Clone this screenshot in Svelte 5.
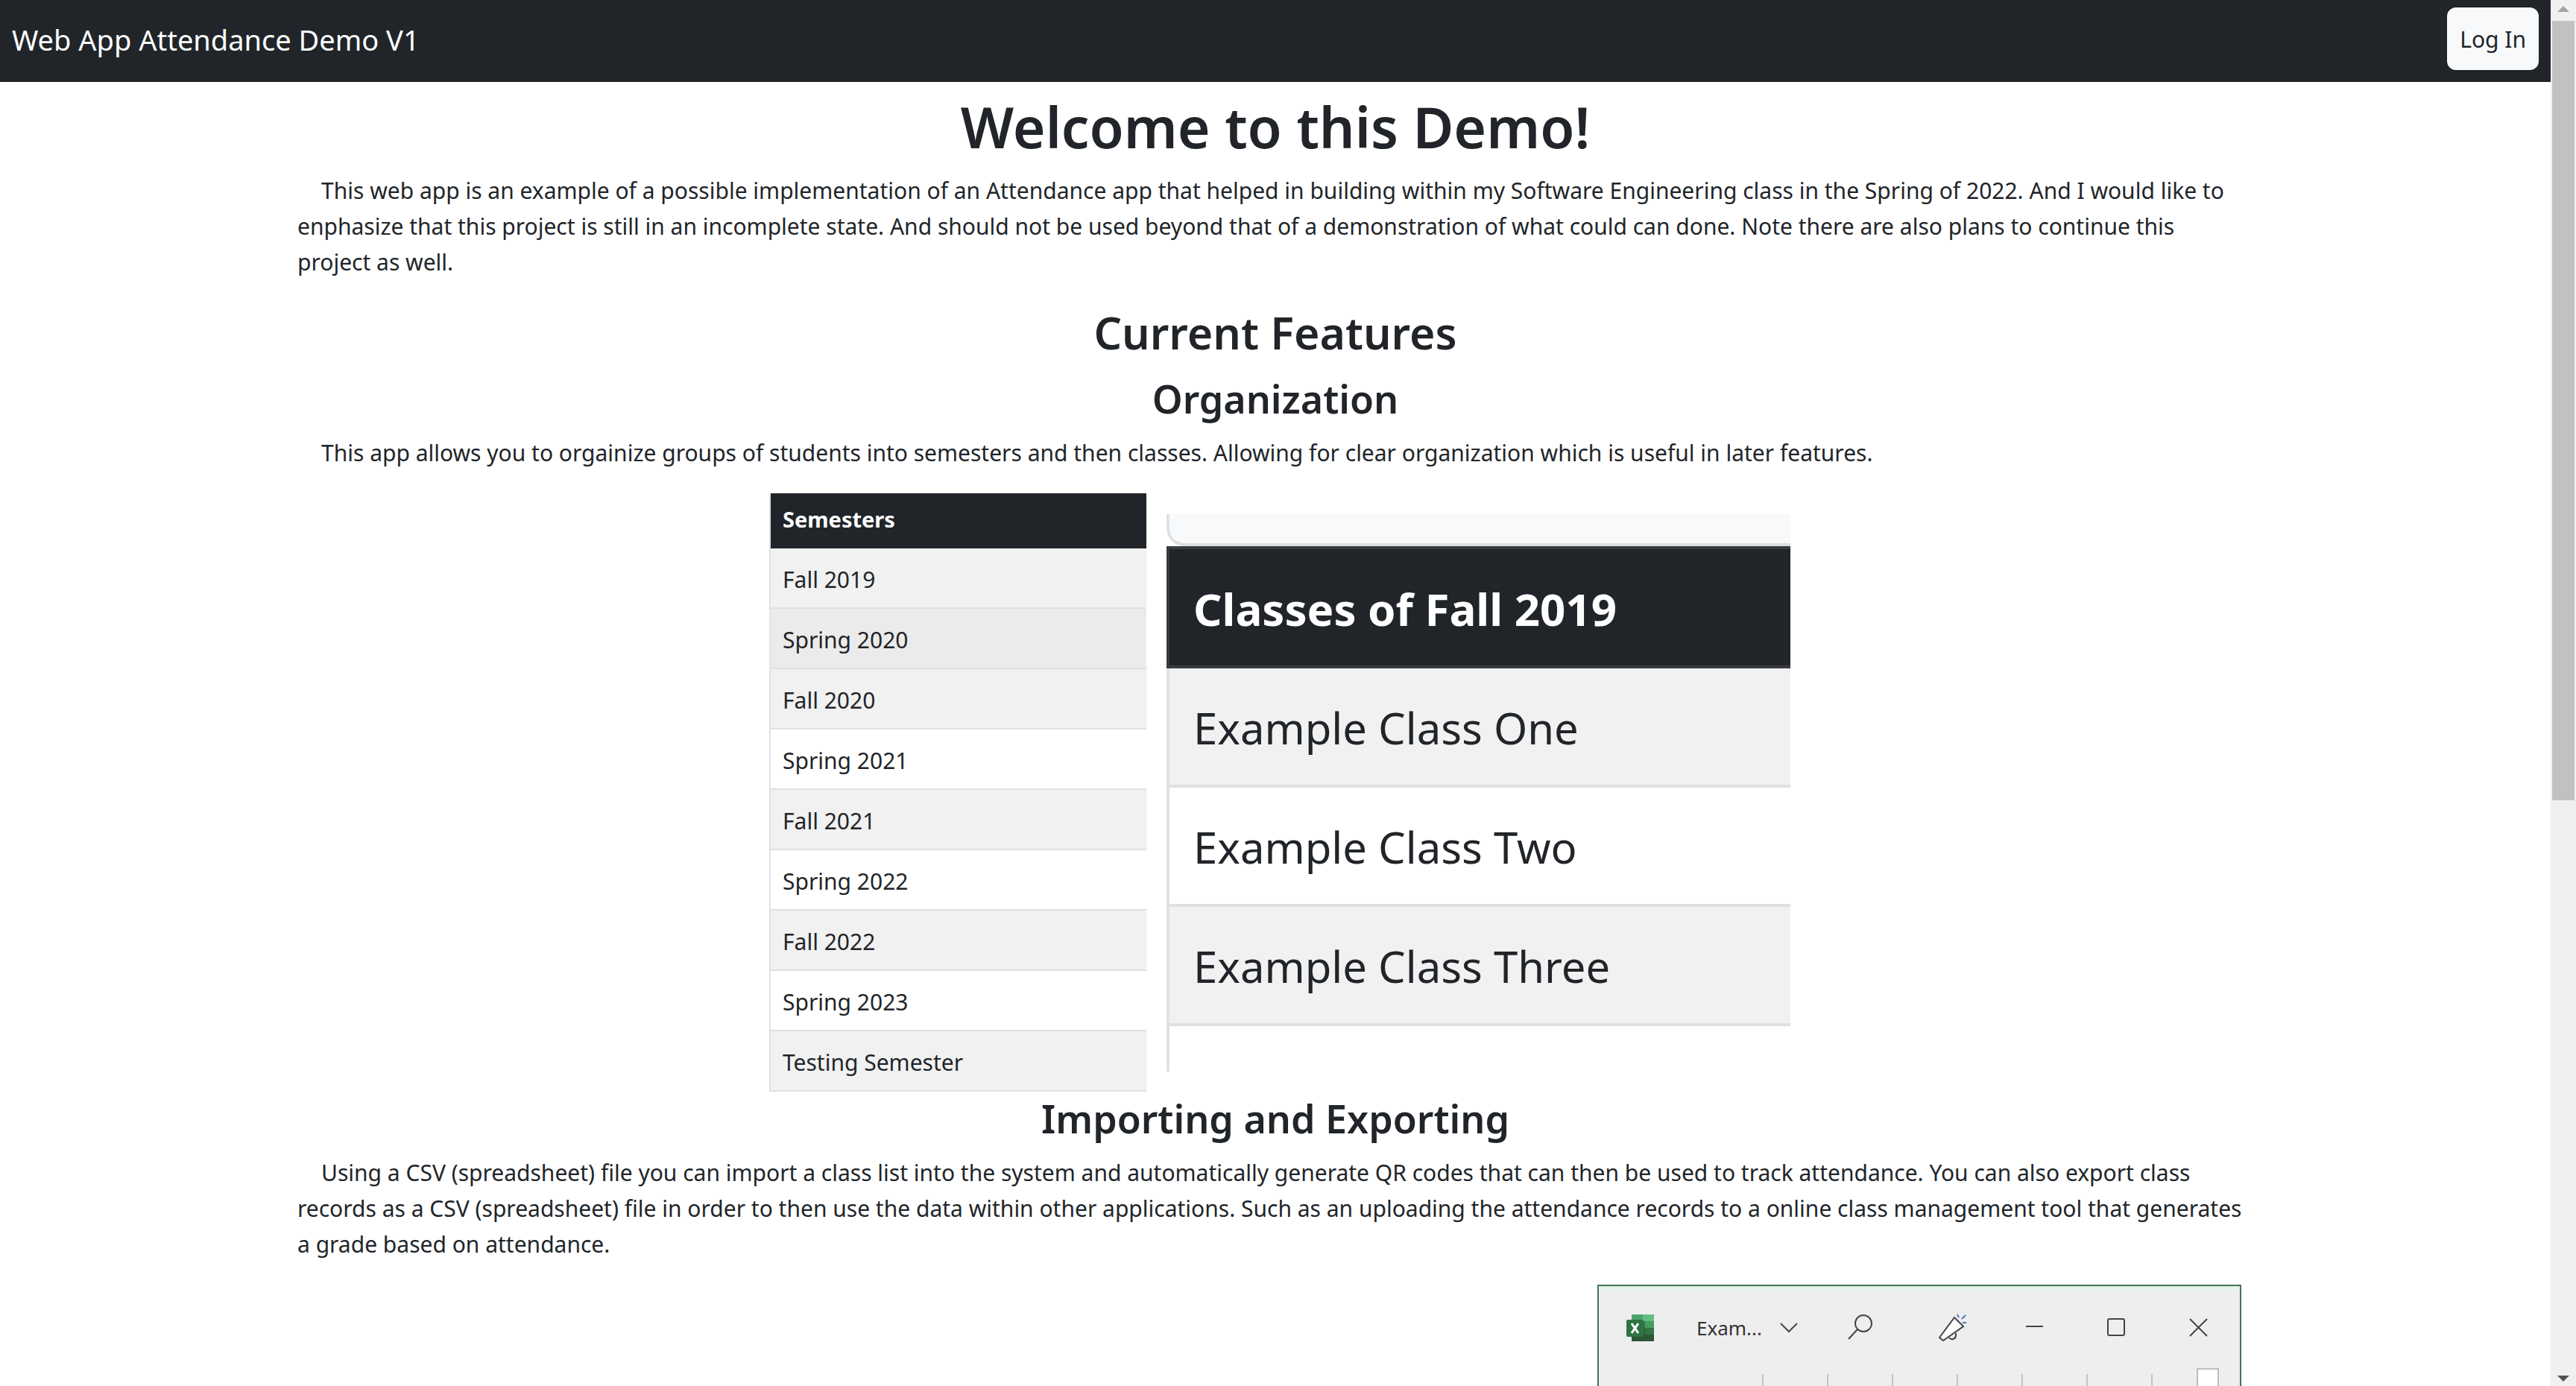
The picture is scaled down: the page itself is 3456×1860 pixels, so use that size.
<script>
  const semesters = [
    'Fall 2019', 'Spring 2020', 'Fall 2020', 'Spring 2021', 'Fall 2021',
    'Spring 2022', 'Fall 2022', 'Spring 2023', 'Testing Semester'
  ];
  const classes = ['Example Class One', 'Example Class Two', 'Example Class Three'];
  const columns = [1, 2, 3, 4, 5, 6, 7];
</script>

<div class="window">
  <div class="page">
    <nav class="navbar">
      <a class="brand" href="#home">Web App Attendance Demo V1</a>
      <button class="login" type="button">Log In</button>
    </nav>

    <main class="container">
      <h1>Welcome to this Demo!</h1>
      <p>
        This web app is an example of a possible implementation of an Attendance app that helped in building within my Software Engineering class in the Spring of 2022. And I would like to<br />
        enphasize that this project is still in an incomplete state. And should not be used beyond that of a demonstration of what could can done. Note there are also plans to continue this<br />
        project as well.
      </p>

      <h2>Current Features</h2>
      <h3>Organization</h3>
      <p>This app allows you to orgainize groups of students into semesters and then classes. Allowing for clear organization which is useful in later features.</p>

      <div class="figures">
        <table class="semesters">
          <thead><tr><th scope="col">Semesters</th></tr></thead>
          <tbody>
            {#each semesters as name, i}
              <tr class:striped={i % 2 === 0} class:hovered={i === 1}><td>{name}</td></tr>
            {/each}
          </tbody>
        </table>

        <div class="classes">
          <div class="card-edge"></div>
          <table>
            <thead><tr><th scope="col">Classes of Fall 2019</th></tr></thead>
            <tbody>
              {#each classes as name, i}
                <tr class:striped={i % 2 === 0}><td>{name}</td></tr>
              {/each}
            </tbody>
          </table>
          <div class="blank"></div>
        </div>
      </div>

      <h3>Importing and Exporting</h3>
      <p>
        Using a CSV (spreadsheet) file you can import a class list into the system and automatically generate QR codes that can then be used to track attendance. You can also export class<br />
        records as a CSV (spreadsheet) file in order to then use the data within other applications. Such as an uploading the attendance records to a online class management tool that generates<br />
        a grade based on attendance.
      </p>

      <section class="sheet" aria-label="Spreadsheet">
        <div class="titlebar">
          <svg class="logo" viewBox="0 0 38 38" aria-hidden="true">
            <rect x="7" y="1" width="15" height="9" fill="#4da56c" />
            <rect x="22" y="1" width="15" height="9" fill="#62bd83" />
            <rect x="7" y="10" width="15" height="9" fill="#357c4b" />
            <rect x="22" y="10" width="15" height="9" fill="#449d60" />
            <rect x="7" y="19" width="15" height="18" fill="#2b5737" />
            <rect x="22" y="19" width="15" height="9" fill="#337345" />
            <rect x="22" y="28" width="15" height="9" fill="#2b5737" />
            <rect x="9" y="10" width="16" height="22" fill="#244f31" opacity=".5" />
            <rect x="0" y="8" width="23" height="23" rx="2" fill="#2f7344" />
            <path d="M7 13l9 13M16 13L7 26" stroke="#fff" stroke-width="3" fill="none" />
          </svg>
          <button class="filename" type="button">
            <span>Exam...</span>
            <svg viewBox="0 0 24 14" width="24" height="14" aria-hidden="true"><path d="M1 1l11 11L23 1" /></svg>
          </button>
          <div class="tools">
            <button class="search" type="button" aria-label="Search">
              <svg viewBox="0 0 38 38"><circle cx="23" cy="13" r="11" /><path d="M15 21L3 34" /></svg>
            </button>
            <button type="button" aria-label="What's new">
              <svg viewBox="0 0 38 38">
                <path d="M14 32a5 5 0 0 0 9-2v-4" />
                <path d="M21 5L1 32l5 4L33 17z" fill="#fff" />
                <path d="M25 1l2 4M36 2l-5 5M32 12h5" stroke="#4a7cb5" />
              </svg>
            </button>
            <button type="button" aria-label="Minimize">
              <svg viewBox="0 0 38 38"><path d="M7 17h23" /></svg>
            </button>
            <button type="button" aria-label="Maximize">
              <svg viewBox="0 0 38 38"><rect x="7" y="7" width="22" height="22" rx="2" /></svg>
            </button>
            <button type="button" aria-label="Close">
              <svg viewBox="0 0 38 38"><path d="M7 7l23 23M30 7L7 30" /></svg>
            </button>
          </div>
        </div>
        <div class="ruler">
          {#each columns as column (column)}<span class="tick"></span>{/each}
          <span class="corner"></span>
        </div>
      </section>
    </main>
  </div>

  <div class="scrollbar" aria-hidden="true">
    <svg viewBox="0 0 16 8" width="16" height="8"><path d="M0 8l8-8 8 8z" fill="#a3a3a3" /></svg>
    <div class="track"><div class="thumb"></div></div>
    <svg viewBox="0 0 16 8" width="16" height="8"><path d="M0 0l8 8 8-8z" fill="#505050" /></svg>
  </div>
</div>

<style>
  :global(body) {
    margin: 0;
    background: #fff;
  }

  .window {
    display: flex;
    height: 100vh;
    overflow: hidden;
    color: #212529;
    font-family: 'Noto Sans', 'Open Sans', sans-serif;
    font-size: 30px;
    line-height: 48px;
  }

  .page {
    flex: 1;
    min-width: 0;
    overflow: hidden;
  }

  .navbar {
    display: flex;
    align-items: center;
    justify-content: space-between;
    box-sizing: border-box;
    height: 110px;
    padding: 0 16px 6px;
    background: #212529;
  }

  .brand {
    padding-top: 2px;
    color: #fff;
    font-size: 38px;
    text-decoration: none;
  }

  .login {
    height: 84px;
    padding: 2px 17px 0;
    border: 0;
    border-radius: 12px;
    background: #f8f9fa;
    color: #212529;
    font: inherit;
  }

  .container {
    box-sizing: border-box;
    max-width: 2640px;
    margin: 0 auto;
    padding: 8px 8px 0;
  }

  h1,
  h2,
  h3 {
    margin: 0 0 14px;
    padding-top: 2px;
    font-weight: 600;
    text-align: center;
  }

  h1 {
    margin-bottom: 12px;
    padding-top: 4px;
    font-size: 75px;
    line-height: 96px;
  }

  h2 {
    font-size: 59px;
    line-height: 77px;
  }

  h3 {
    font-size: 52px;
    line-height: 67px;
  }

  p {
    margin: 0 0 30px;
    padding-top: 2px;
    text-indent: 32px;
    white-space: nowrap;
  }

  .figures {
    display: flex;
    align-items: center;
    justify-content: center;
    gap: 27px;
    padding-left: 12px;
  }

  table {
    width: 100%;
    border-collapse: separate;
    border-spacing: 0;
  }

  th,
  td {
    box-sizing: border-box;
    text-align: left;
  }

  th {
    background: #212529;
    color: #fff;
    font-weight: 700;
  }

  td {
    border-bottom: 2px solid #dfe0e1;
  }

  .striped {
    background: #f1f1f1;
  }

  .hovered {
    background: #ebebeb;
  }

  .semesters {
    width: 506px;
    border-left: 2px solid #dee2e6;
  }

  .semesters th {
    height: 74px;
    padding: 0 16px 4px;
    font-size: 29px;
  }

  .semesters td {
    height: 81px;
    padding: 4px 16px 0;
  }

  .classes {
    width: 837px;
    font-size: 58px;
    line-height: 96px;
  }

  .card-edge {
    box-sizing: border-box;
    height: 43px;
    border-bottom: 4px solid #dcdee0;
    border-left: 4px solid #dee2e6;
    border-bottom-left-radius: 24px;
    background: #f8f9fa;
  }

  .classes th {
    height: 164px;
    padding: 4px 32px 0;
    border: 4px solid #373b3e;
    border-right: 0;
    font-size: 60px;
  }

  .classes td {
    height: 160px;
    padding: 4px 32px 0;
    border-bottom: 4px solid #dfe0e1;
    border-left: 4px solid #dee2e6;
  }

  .blank {
    height: 61px;
    border-left: 4px solid #dee2e6;
  }

  .sheet {
    box-sizing: border-box;
    width: 864px;
    height: 800px;
    margin-left: auto;
    margin-right: 16px;
    border: 2px solid #47725a;
    background: #eee;
    box-shadow: inset 0 4px 3px #e2f5e3;
  }

  .titlebar {
    display: flex;
    align-items: center;
    box-sizing: border-box;
    height: 110px;
    padding: 2px 36px 0 37px;
  }

  .titlebar svg {
    fill: none;
    stroke: #444;
    stroke-width: 2;
  }

  .titlebar .logo {
    width: 38px;
    height: 38px;
    stroke: none;
  }

  .titlebar button {
    padding: 0;
    border: 0;
    background: none;
    color: #333;
    font: inherit;
  }

  .titlebar .filename {
    display: flex;
    align-items: center;
    gap: 24px;
    margin-left: 56px;
    font-size: 26px;
  }

  .tools {
    display: flex;
    flex: 1;
    justify-content: flex-end;
    gap: 72px;
  }

  .tools button {
    display: flex;
  }

  .tools .search {
    margin-right: 14px;
  }

  .tools svg {
    width: 38px;
    height: 38px;
  }

  .ruler {
    display: flex;
    align-items: flex-end;
    height: 48px;
    padding-left: 134px;
  }

  .tick {
    box-sizing: border-box;
    width: 87px;
    height: 40px;
    border-right: 2px solid #c4c4c4;
  }

  .corner {
    box-sizing: border-box;
    width: 30px;
    height: 48px;
    margin-left: 59px;
    border: 2px solid #bdbdbd;
    background: #fff;
  }

  .scrollbar {
    display: flex;
    flex-direction: column;
    align-items: center;
    justify-content: space-between;
    box-sizing: border-box;
    width: 34px;
    padding: 8px 2px 6px;
    background: #f0f0f0;
  }

  .track {
    flex: 1;
    align-self: stretch;
    margin: 12px 0 20px;
  }

  .thumb {
    height: 58.2%;
    background: #c1c1c1;
  }
</style>
